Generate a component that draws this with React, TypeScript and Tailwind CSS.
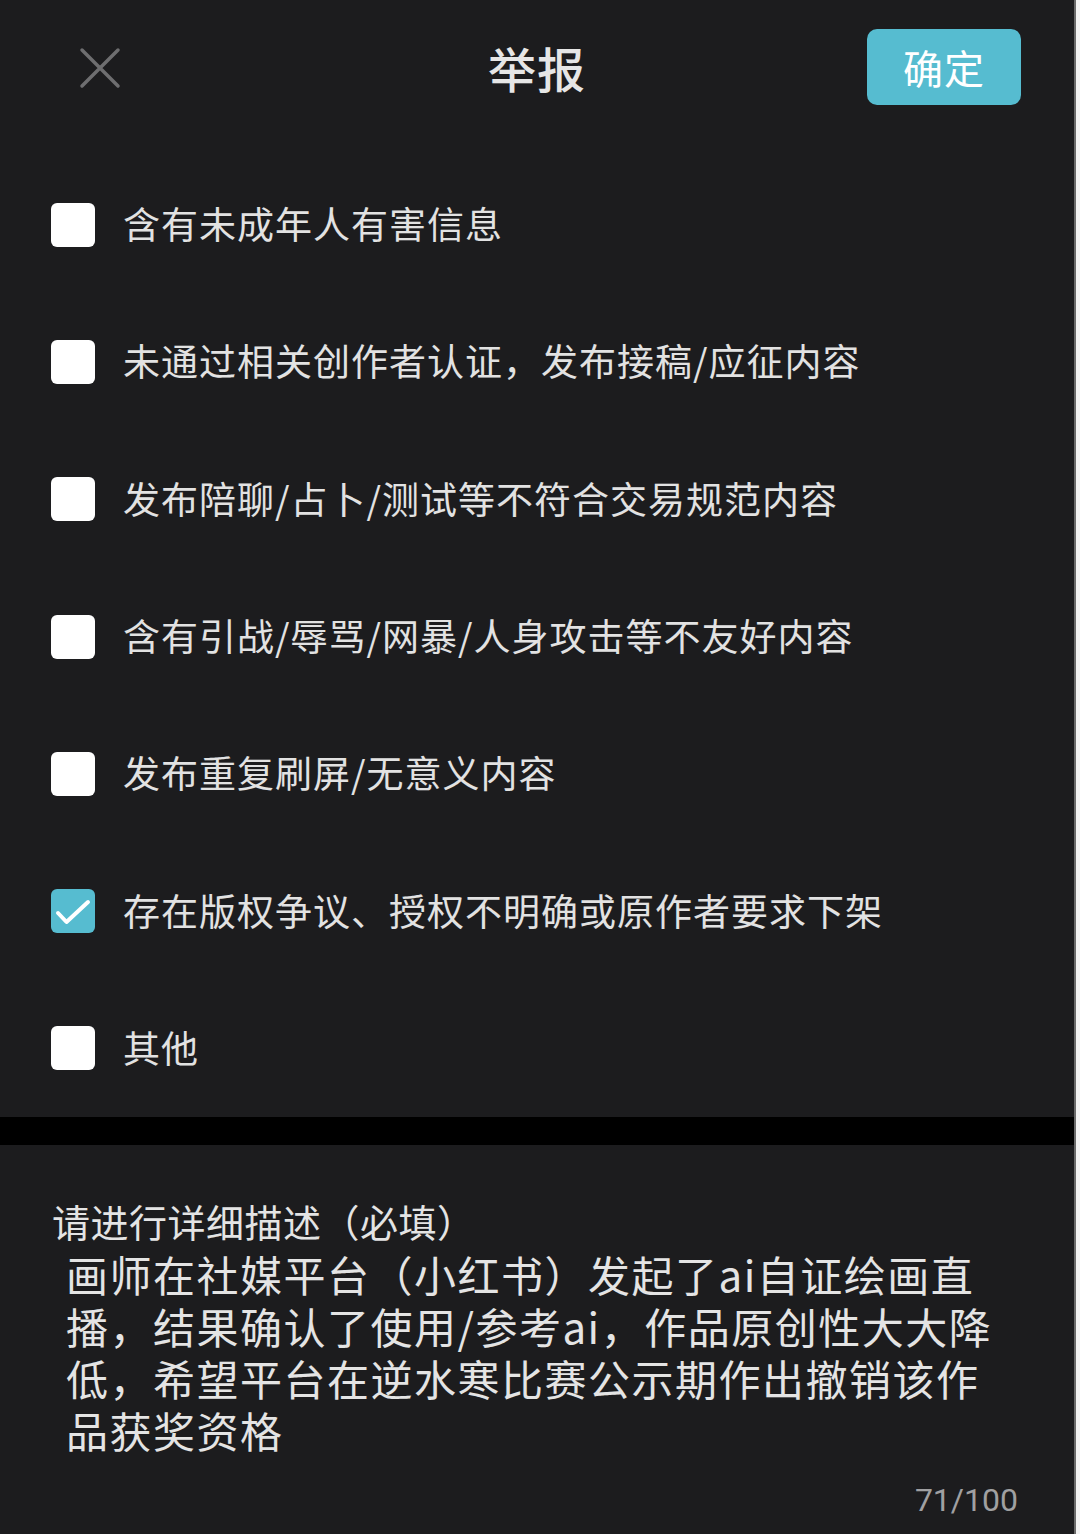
import { useState } from "react";

const reasons = [
	"含有未成年人有害信息",
	"未通过相关创作者认证，发布接稿/应征内容",
	"发布陪聊/占卜/测试等不符合交易规范内容",
	"含有引战/辱骂/网暴/人身攻击等不友好内容",
	"发布重复刷屏/无意义内容",
	"存在版权争议、授权不明确或原作者要求下架",
	"其他",
];

const detailLines = [
	"画师在社媒平台（小红书）发起了ai自证绘画直",
	"播，结果确认了使用/参考ai，作品原创性大大降",
	"低，希望平台在逆水寒比赛公示期作出撤销该作",
	"品获奖资格",
];

function CheckBox({ checked }: { checked: boolean }) {
	return (
		<span
			className={
				checked
					? "w-[44px] h-[44px] rounded-[6px] bg-[#56bcd0] flex items-center justify-center shrink-0"
					: "w-[44px] h-[44px] rounded-[6px] bg-white shrink-0"
			}
		>
			{checked && (
				<svg width="44" height="44" viewBox="0 0 44 44" fill="none">
					<path
						d="M7 24 L15.5 33 L37 13"
						stroke="white"
						strokeWidth="4"
						strokeLinecap="round"
						strokeLinejoin="round"
					/>
				</svg>
			)}
		</span>
	);
}

function App() {
	const [selected, setSelected] = useState<number[]>([5]);

	const toggle = (i: number) => {
		setSelected((prev) =>
			prev.includes(i) ? prev.filter((x) => x !== i) : [...prev, i]
		);
	};

	return (
		<div
			className="w-[1080px] h-[1534px] bg-[#f2f2f2] flex"
			style={{ fontFamily: '"Noto Sans CJK SC", "Noto Sans", sans-serif' }}
		>
			<div className="w-[1076px] h-full bg-[#1c1c1e] border-r-[2px] border-[#6a6a6a] flex flex-col">
				{/* header */}
				<div className="h-[136px] shrink-0 relative flex items-center justify-center">
					<button className="absolute left-[78px] top-[46px] w-[44px] h-[44px] flex items-center justify-center">
						<svg width="44" height="44" viewBox="0 0 44 44" fill="none">
							<path
								d="M4 4 L40 40 M40 4 L4 40"
								stroke="#6e6e70"
								strokeWidth="3.5"
								strokeLinecap="round"
							/>
						</svg>
					</button>
					<h1 className="text-[48px] leading-none font-medium text-[#e6e6e6] tracking-[1px] mt-[-2px]">
						举报
					</h1>
					<button className="absolute left-[867px] top-[29px] w-[154px] h-[76px] rounded-[10px] bg-[#56bcd0] text-white text-[40px] leading-none tracking-[1px]">
						确定
					</button>
				</div>

				{/* reasons */}
				<div className="flex flex-col pt-[20px]">
					{reasons.map((r, i) => (
						<div
							key={r}
							onClick={() => toggle(i)}
							className="h-[137.3px] flex items-center pl-[51px] gap-[28px] cursor-pointer"
						>
							<CheckBox checked={selected.includes(i)} />
							<span className="text-[37px] leading-none text-[#e2e2e2] tracking-[1px] mt-[-2px]">
								{r}
							</span>
						</div>
					))}
				</div>

				<div className="h-[28px] bg-black mt-auto shrink-0" />

				{/* details */}
				<div className="h-[389px] shrink-0 flex flex-col">
					<div className="pt-[53px] pl-[52px] text-[38px] leading-[46px] text-[#e4e4e4] tracking-[0.5px]">
						请进行详细描述（必填）
					</div>
					<p className="mt-[4px] ml-[66px] text-[42px] leading-[52px] text-[#e4e4e4] tracking-[1.5px] whitespace-nowrap">
						{detailLines.map((l, i) => (
							<span key={l}>
								{l}
								{i < detailLines.length - 1 && <br />}
							</span>
						))}
					</p>
					<div
						className="mt-auto mb-[14px] pr-[56px] text-right text-[32px] leading-[40px] text-[#a0a0a2]"
						style={{ fontFamily: "Roboto, sans-serif" }}
					>
						71/100
					</div>
				</div>
			</div>
		</div>
	);
}

export default App;
